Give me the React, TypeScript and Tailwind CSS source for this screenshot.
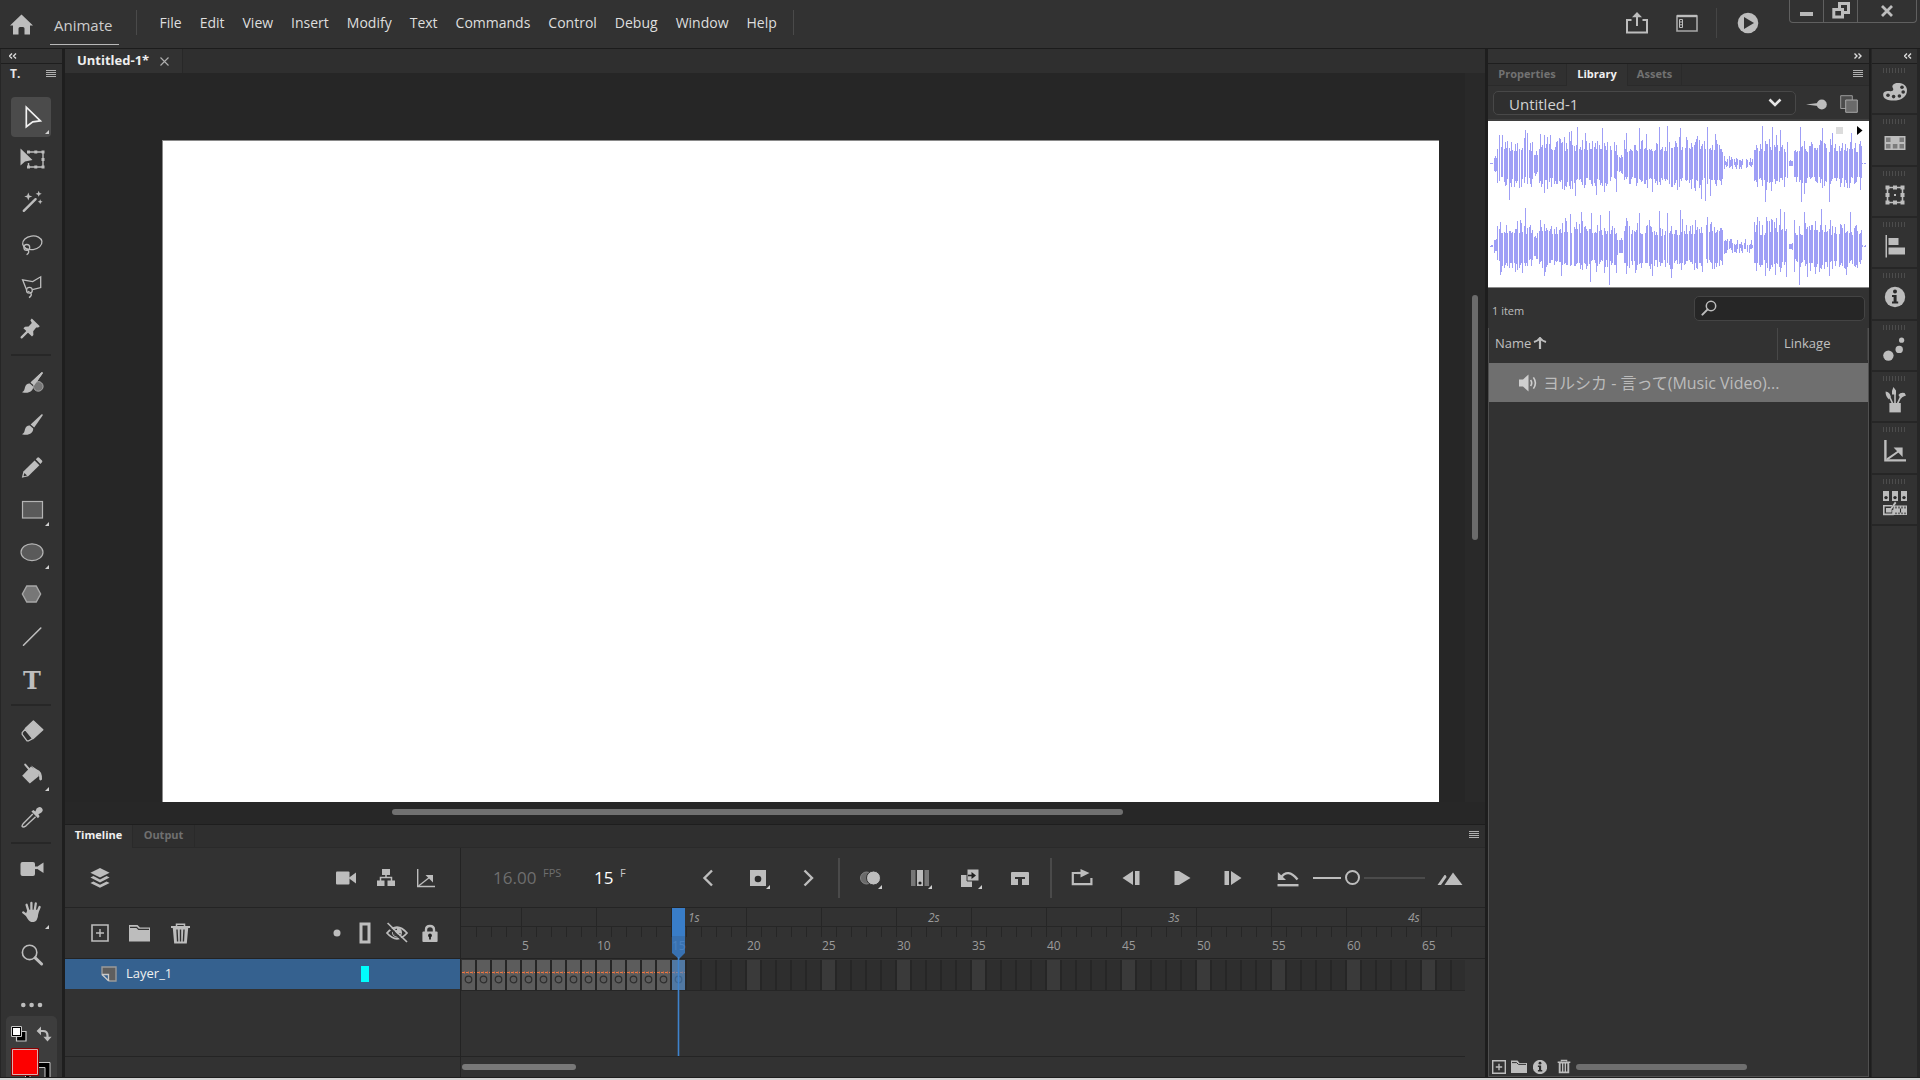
import { useState } from 'react';
import type { ReactNode } from 'react';

const menus = ['File', 'Edit', 'View', 'Insert', 'Modify', 'Text', 'Commands', 'Control', 'Debug', 'Window', 'Help'];

const FRAME_COUNT = 67;
const FPS = 16;
const frames = Array.from({ length: FRAME_COUNT }, (_, i) => i + 1);

type IconProps = { children: ReactNode; size?: number; className?: string };

// icons are drawn on a square grid, one unit to the pixel
const Icon = ({ children, size = 28, className = 'text-[#bdbdbd]' }: IconProps) => (
  <svg width={size} height={size} viewBox={`0 0 ${size} ${size}`} fill="none" className={`shrink-0 ${className}`} aria-hidden="true">
    {children}
  </svg>
);

const Corner = ({ className = 'right-[2px] bottom-[3px]' }: { className?: string }) => (
  <svg width="4" height="4" viewBox="0 0 4 4" className={`absolute ${className}`} aria-hidden="true">
    <path d="M4 0V4H0Z" fill="#d0d0d0" />
  </svg>
);

const Hamburger = () => (
  <svg width="10" height="8" viewBox="0 0 10 8" shapeRendering="crispEdges" aria-hidden="true">
    <path d="M0 .5H10M0 2.5H10M0 4.5H10M0 6.5H10" stroke="#b0b0b0" />
  </svg>
);

const Chevrons = ({ right = false }: { right?: boolean }) => (
  <svg width="8" height="6" viewBox="0 0 8 6" fill="none" aria-hidden="true">
    <path d={right ? 'M.5 .5L3 3L.5 5.5M4.5 .5L7 3L4.5 5.5' : 'M3 .5L.5 3L3 5.5M7 .5L4.5 3L7 5.5'} stroke="#dcdcdc" strokeWidth="1.4" />
  </svg>
);

const BrushShape = () => (
  <g fill="currentColor">
    <path d="M24.6 4.2C25.6 3.9 26 4.6 25.6 5.6L17.2 17.6L13.6 14.4Z" />
    <path d="M12.8 15.4L16.2 18.6C16.6 23.4 11 26.2 5 24.2C7.4 23 7.4 21.6 8 19.2C8.6 16.4 10.4 15.2 12.8 15.4Z" />
  </g>
);

const CameraShape = () => (
  <g fill="currentColor">
    <rect x="3.5" y="7" width="14.5" height="14" rx="2" />
    <path d="M18.5 12.8L26.5 7.6V18Z" />
    <rect x="17" y="11.5" width="3" height="2.6" />
  </g>
);

type Tool = { name: string; icon: ReactNode; more?: boolean };

const toolGroups: { height: string; divider: string; tools: Tool[] }[] = [
  {
    height: 'h-[251px]',
    divider: 'my-[6px]',
    tools: [
      { name: 'Selection', more: true, icon: <path d="M9.3 4.2V23.7L15.8 18.9L23.4 17.9Z" stroke="#f2f2f2" strokeWidth="1.7" strokeLinejoin="miter" /> },
      {
        name: 'Free Transform',
        icon: (
          <>
            <path d="M11.5 7H26V22H11.5V18" stroke="currentColor" strokeWidth="1.4" />
            <path d="M10 5.5h3v3h-3zM17.3 5.5h3v3h-3zM24.5 5.5h3v3h-3zM24.5 13h3v3h-3zM24.5 20.5h3v3h-3zM17.3 20.5h3v3h-3zM10 20.5h3v3h-3z" fill="currentColor" />
            <path d="M3.5 3.5V20.5L8 16.5L15.5 15Z" fill="currentColor" />
          </>
        ),
      },
      {
        name: 'Magic Wand',
        icon: (
          <>
            <path d="M6.8 23.8L18.6 12.2" stroke="currentColor" strokeWidth="2.4" strokeLinecap="round" />
            <path d="M11.3 5.5L12.4 8.4L15.3 9.5L12.4 10.6L11.3 13.5L10.2 10.6L7.3 9.5L10.2 8.4ZM21.7 3.8L22.6 6L24.8 6.8L22.6 7.7L21.7 9.8L20.8 7.7L18.6 6.8L20.8 6ZM23.2 12.3L23.9 14L25.6 14.8L23.9 15.5L23.2 17.2L22.5 15.5L20.8 14.8L22.5 14Z" fill="currentColor" />
          </>
        ),
      },
      {
        name: 'Lasso',
        icon: (
          <g stroke="currentColor" strokeWidth="1.3">
            <ellipse cx="15.3" cy="12.8" rx="9.7" ry="6.8" transform="rotate(-8 15.3 12.8)" />
            <circle cx="9.8" cy="17.4" r="2.9" />
            <path d="M8 18.2C11.5 19.6 13.5 22.1 9.6 24.8" />
          </g>
        ),
      },
      {
        name: 'Polygon Lasso',
        icon: (
          <g stroke="currentColor" strokeWidth="1.3">
            <path d="M9.4 17.6L5.6 7.8L15.7 9.6L23.7 4.8V15.6L15.4 17.6" />
            <circle cx="12.4" cy="18.2" r="2.9" />
            <path d="M10.6 19C14.4 20.4 16 23 12 25.6" />
          </g>
        ),
      },
      {
        name: 'Asset Warp',
        icon: (
          <g fill="currentColor">
            <path d="M14.8 4.6L22.8 12.2L21.2 13.6L19.2 13.4L16.2 17.2L16.4 21L15 22.6L6.4 14.2L8 12.8L11.6 12.6L14.8 9L13.4 6.2Z" />
            <path d="M10.6 17.4L4.6 23.4" stroke="currentColor" strokeWidth="2.2" strokeLinecap="round" />
          </g>
        ),
      },
    ],
  },
  {
    height: 'h-[337px]',
    divider: 'my-[5px]',
    tools: [
      {
        name: 'Fluid Brush',
        icon: (
          <>
            <BrushShape />
            <circle cx="21.3" cy="18.4" r="4.8" fill="#777777" stroke="#a8a8a8" />
            <path d="M24.6 4.2C25.6 3.9 26 4.6 25.6 5.6L17.2 17.6L13.6 14.4Z" fill="currentColor" />
          </>
        ),
      },
      { name: 'Classic Brush', icon: <BrushShape /> },
      {
        name: 'Pencil',
        icon: (
          <>
            <path d="M17.6 7.4L22.4 12.2L11.2 23.2L4.8 24.8L6.4 18.4Z" fill="currentColor" />
            <path d="M18.8 6.2L20.6 4.6Q21.4 4 22.2 4.8L25 7.6Q25.8 8.4 25 9.2L23.4 11Z" fill="currentColor" />
            <path d="M7.4 20L10 22.4L7 23.2L6.6 22.8Z" fill="#323232" />
          </>
        ),
      },
      { name: 'Rectangle', more: true, icon: <rect x="5.5" y="6.5" width="20" height="16.5" fill="#5a5a5a" stroke="#b4b4b4" strokeWidth="1.2" /> },
      { name: 'Oval', more: true, icon: <ellipse cx="15" cy="14.2" rx="11" ry="8.4" fill="#5a5a5a" stroke="#b4b4b4" strokeWidth="1.2" /> },
      { name: 'PolyStar', icon: <path d="M9.8 6H19.2L23.6 14L19.2 22H9.8L5.4 14Z" fill="#777777" stroke="#a8a8a8" strokeWidth="1.4" /> },
      { name: 'Line', icon: <path d="M6.5 22.2L23.8 5" stroke="currentColor" strokeWidth="1.6" strokeLinecap="round" /> },
      { name: 'Text', icon: <text x="15" y="24" textAnchor="middle" fontFamily="DejaVu Serif, serif" fontWeight="bold" fontSize="24" fill="currentColor">T</text> },
    ],
  },
  {
    height: 'h-[126px]',
    divider: 'my-[5px]',
    tools: [
      {
        name: 'Eraser',
        icon: (
          <>
            <path d="M16.4 4L25.8 12.8L16.2 21.4L8.4 11.6Z" fill="currentColor" stroke="currentColor" strokeWidth="1.4" strokeLinejoin="round" />
            <path d="M8 12.4L5.2 15.6V17.4L10 23.8H11.8L15.6 21.6Z" stroke="currentColor" strokeWidth="1.3" strokeLinejoin="round" />
          </>
        ),
      },
      {
        name: 'Paint Bucket',
        more: true,
        icon: (
          <>
            <path d="M8.2 4.6L11.6 8.6L15 13" stroke="currentColor" strokeWidth="2" strokeLinecap="round" />
            <path d="M14 6.6L20.4 12L22 16L12.8 23.4L5.2 15.8Z" fill="currentColor" />
            <path d="M14 5.6L20 9.4Q25.4 11 25 19.6Q23.4 21.4 22.2 19.2Q22.8 14.4 19.6 13.4Z" fill="currentColor" />
          </>
        ),
      },
      {
        name: 'Eyedropper',
        icon: (
          <>
            <path d="M15.8 11L6.4 20.4Q4.4 23 5.4 23.8Q6.4 24.6 9 22.8L18.6 13.8" stroke="currentColor" strokeWidth="1.4" />
            <path d="M14.4 8.4L16.4 7L18.4 8.4L19.6 5.6Q22.4 2.8 24.8 5Q27 7.4 24.2 9.8L21.4 11.2L22.6 13.2L21 15.2Z" fill="currentColor" />
          </>
        ),
      },
    ],
  },
  {
    height: 'h-[126px]',
    divider: '',
    tools: [
      { name: 'Camera', icon: <CameraShape /> },
      {
        name: 'Hand',
        more: true,
        icon: (
          <>
            <path d="M9.6 6.8L11.8 14.2M14.4 5V13.2M18.8 5.4L17.6 13.2M22.6 9L20 15.2M6.2 14.4L11 18.2" stroke="currentColor" strokeWidth="2.3" strokeLinecap="round" />
            <path d="M10.6 11.8H20.8L21.4 15Q20.6 23.8 16.8 24H14.2Q11.4 23.4 8.4 16.8Z" fill="currentColor" />
          </>
        ),
      },
      {
        name: 'Zoom',
        icon: (
          <>
            <circle cx="12.6" cy="11.4" r="7.2" stroke="currentColor" strokeWidth="1.6" />
            <path d="M18.2 16.8L24.6 23" stroke="currentColor" strokeWidth="3" strokeLinecap="round" />
          </>
        ),
      },
    ],
  },
];

const ToolsPanel = () => {
  const [active, setActive] = useState('Selection');

  return (
    <aside className="flex w-[62px] shrink-0 flex-col overflow-hidden border-l border-[#262626] bg-[#323232]">
      <div className="flex h-[15px] shrink-0 items-center border-b border-[#1e1e1e] pl-2">
        <Chevrons />
      </div>
      <div className="flex h-[22px] shrink-0 items-center justify-between pr-[6px] pb-[2px] pl-[9px] text-[12px] font-bold text-[#e6e6e6]">
        <span>T.</span>
        <button aria-label="Tools menu"><Hamburger /></button>
      </div>
      <div className="flex flex-col items-start pt-[11px] pl-[10px]">
        {toolGroups.map((group, i) => (
          <div key={i} className="flex flex-col items-center">
            <div className={`flex flex-col justify-between ${group.height}`}>
              {group.tools.map((tool) => (
                <button
                  key={tool.name}
                  aria-label={tool.name}
                  onClick={() => setActive(tool.name)}
                  className={`relative flex size-10 items-center justify-center rounded-[4px] ${active === tool.name ? 'bg-[#4b4b4b]' : ''}`}
                >
                  <Icon>{tool.icon}</Icon>
                  {tool.more && <Corner />}
                </button>
              ))}
            </div>
            {group.divider && <div className={`h-[2px] w-10 bg-[#272727] ${group.divider}`} />}
          </div>
        ))}
        <button aria-label="Edit toolbar" className="mt-5 flex h-5 w-10 items-center justify-center">
          <Icon>
            <g fill="currentColor">
              <circle cx="6.3" cy="14" r="2.3" />
              <circle cx="14.6" cy="14" r="2.3" />
              <circle cx="23" cy="14" r="2.3" />
            </g>
          </Icon>
        </button>
      </div>
      <div className="mx-[5px] mt-px flex-1 rounded-t-[5px] bg-[#3d3d3d] px-[5px] pt-[10px]">
        <div className="flex justify-between">
          <button aria-label="Default colors">
            <Icon size={16}>
              <path d="M5.5 5.5H15V15H5.5Z" fill="#000" stroke="#c8c8c8" strokeWidth="1.2" />
              <path d="M1 1H10V10H1Z" fill="#fff" stroke="#000" strokeWidth="2" />
              <path d="M.5 .5H10.5V10.5H.5Z" stroke="#c8c8c8" />
            </Icon>
          </button>
          <button aria-label="Swap colors">
            <Icon size={16}>
              <path d="M3.5 5H7Q11.5 5 11.5 9.5V12" stroke="currentColor" strokeWidth="2.2" />
              <path d="M5 .6V9.2L.6 5ZM7.4 10.8H15.6L11.5 15.6Z" fill="currentColor" />
            </Icon>
          </button>
        </div>
        <button aria-label="Fill and stroke color" className="mt-[6px] block">
          <svg width="40" height="30" viewBox="0 0 40 30" fill="none" aria-hidden="true">
            <path d="M14.5 14.5H39V40H14.5Z" fill="#000" stroke="#c8c8c8" />
            <path d="M19 19.5H34V40H19Z" fill="#323232" stroke="#c8c8c8" />
            <path d="M.5 .5H27.5V27.5H.5Z" fill="#fd0000" stroke="#8c0000" />
            <path d="M1.5 1.5H26.5V26.5H1.5Z" stroke="#d9b0b0" />
          </svg>
        </button>
      </div>
    </aside>
  );
};

const Header = () => (
  <header className="flex h-[49px] shrink-0 items-start border-b border-[#1c1c1c] bg-[#323232]">
    <div className="flex h-12 flex-1 items-center">
      <button aria-label="Home" className="ml-[10px]">
        <Icon size={23}>
          <path d="M11.5 1.5L23 12.5H20V21.5H14.5V15.5Q14.5 14 13 14H10Q8.5 14 8.5 15.5V21.5H3V12.5H0Z" fill="currentColor" />
        </Icon>
      </button>
      <a href="#" className="ml-[17px] flex h-[45px] items-center self-start border-b border-[#b8b8b8] pt-[6px] pr-[7px] pl-1 text-[15px] text-[#cdcdcd]">Animate</a>
      <div className="mb-[3px] ml-[17px] h-[25px] w-px bg-[#4a4a4a]" />
      <nav className="ml-[22px] flex gap-[18px] pb-1 text-[14px] text-[#dedede]">
        {menus.map((menu) => (
          <button key={menu}>{menu}</button>
        ))}
      </nav>
      <div className="mb-[3px] ml-4 h-[25px] w-px bg-[#4a4a4a]" />
    </div>
    <div className="mr-[30px] flex h-[46px] items-center">
      <button aria-label="Quick share">
        <Icon size={22}>
          <path d="M5.5 8H1V20.5H21V8H16.5" stroke="currentColor" strokeWidth="2" />
          <path d="M11 3V14" stroke="currentColor" strokeWidth="2" />
          <path d="M11 0L16 5.2H6Z" fill="currentColor" />
        </Icon>
      </button>
      <button aria-label="Workspaces" className="ml-7">
        <Icon size={22}>
          <path d="M1 4H21V19H1Z" stroke="#a8a8a8" strokeWidth="1.6" />
          <path d="M3.5 7.5H6.5V15.5H3.5ZM3.5 10H6.5M3.5 12.8H6.5" stroke="currentColor" />
          <path d="M1 4H21" stroke="currentColor" strokeWidth="2.4" />
        </Icon>
      </button>
      <div className="ml-[18px] h-[30px] w-px bg-[#454545]" />
      <button aria-label="Test movie" className="ml-5">
        <Icon size={22}>
          <circle cx="11" cy="11" r="10.3" fill="currentColor" />
          <path d="M7 5V17L17 11Z" fill="#323232" />
        </Icon>
      </button>
    </div>
    <div className="mr-[3px] flex h-[23px] rounded-b-[4px] border border-t-0 border-[#606060]">
      <button aria-label="Minimize" className="flex w-[34px] items-center justify-center border-r border-[#606060]">
        <span className="mt-[6px] h-1 w-[13px] bg-[#b8b8b8]" />
      </button>
      <button aria-label="Restore" className="flex w-[34px] items-center justify-center border-r border-[#606060]">
        <Icon size={18}>
          <path d="M7.5 6V1.5H16.5V10.5H12" stroke="currentColor" strokeWidth="3" />
          <path d="M1.8 7.5H10.5V15H1.8Z" stroke="currentColor" strokeWidth="3" />
        </Icon>
      </button>
      <button aria-label="Close" className="flex w-[58px] items-center justify-center">
        <Icon size={14}>
          <path d="M2 2L12 12M12 2L2 12" stroke="currentColor" strokeWidth="2.8" />
        </Icon>
      </button>
    </div>
  </header>
);

const Stage = () => (
  <section className="flex min-h-0 flex-1 flex-col">
    <div className="flex h-6 shrink-0 bg-[#2f2f2f]">
      <div className="flex w-[118px] items-center justify-between border-r border-[#282828] bg-[#323232] pr-[13px] pl-3 text-[13px] font-bold text-[#eeeeee]">
        <span>Untitled-1*</span>
        <button aria-label="Close document">
          <Icon size={9}><path d="M.5 .5L8.5 8.5M8.5 .5L.5 8.5" stroke="#b0b0b0" strokeWidth="1.1" /></Icon>
        </button>
      </div>
    </div>
    <div className="flex min-h-0 flex-1">
      <div className="flex min-w-0 flex-1 bg-[#262626] pt-[67px] pr-[26px] pl-[97px]">
        <div className="flex-1 border-t border-l border-[#8a8a8a] bg-white" />
      </div>
      <div className="flex w-5 justify-center bg-[#292929] pt-[222px]">
        <div className="h-[245px] w-[6px] rounded-full bg-[#6b6b6b]" />
      </div>
    </div>
    <div className="flex h-[22px] shrink-0 items-center bg-[#272727] pb-[2px]">
      <div className="ml-[23%] h-[6px] w-[51.5%] rounded-full bg-[#707070]" />
    </div>
  </section>
);

const PlusBox = () => (
  <Icon size={18}>
    <path d="M1 1H17V17H1Z" stroke="currentColor" strokeWidth="1.6" />
    <path d="M9 5V13M5 9H13" stroke="currentColor" strokeWidth="1.4" />
  </Icon>
);

const Folder = () => (
  <Icon size={21}>
    <path d="M0 2H8.5L11 4.5H21V18.5H0Z" fill="currentColor" />
    <path d="M1 4.4H7.6L9.6 6.4H20" stroke="#323232" strokeWidth="1.2" />
  </Icon>
);

const Trash = () => (
  <Icon size={21}>
    <path d="M6.5 3V1.2H14.5V3" stroke="currentColor" strokeWidth="1.5" />
    <path d="M1 3H20V5H18.2L16.8 20.5H4.2L2.8 5H1Z" fill="currentColor" />
    <path d="M7 6.5L7.6 18.5M10.5 6.5V18.5M14 6.5L13.4 18.5" stroke="#323232" strokeWidth="1.4" />
  </Icon>
);

const LayerPane = () => (
  <div className="flex w-[396px] shrink-0 flex-col border-r border-[#232323]">
    <div className="flex h-[60px] items-center border-b border-[#242424] pl-[25px]">
      <button aria-label="Layers view">
        <Icon size={20}>
          <path d="M10 0L19.6 4.8L10 9.6L.4 4.8Z" fill="currentColor" />
          <path d="M.4 9.6L3.4 8.1L10 11.4L16.6 8.1L19.6 9.6L10 14.4ZM.4 15L3.4 13.5L10 16.8L16.6 13.5L19.6 15L10 19.8Z" fill="currentColor" />
        </Icon>
      </button>
      <div className="mr-[14px] ml-auto flex">
        <button aria-label="Add camera" className="flex w-10 justify-center">
          <Icon size={20}>
            <rect x="0" y="3.5" width="13.5" height="13" rx="1" fill="currentColor" />
            <path d="M12.5 10L20 4.6V15.4Z" fill="currentColor" />
          </Icon>
        </button>
        <button aria-label="Layer parenting" className="flex w-10 justify-center">
          <Icon size={20}>
            <path d="M6 1H14V7H6ZM1 12.5H8.5V18H1ZM11.5 12.5H19V18H11.5Z" fill="currentColor" />
            <path d="M10 6V10M4.5 13V9.5H15.5V13" stroke="currentColor" strokeWidth="1.5" />
          </Icon>
        </button>
        <button aria-label="Layer depth" className="flex w-10 justify-center">
          <Icon size={20}>
            <path d="M1.7 1V18.5H19" stroke="currentColor" strokeWidth="1.4" />
            <path d="M2.5 18L14 9" stroke="currentColor" strokeWidth="1.3" />
            <path d="M9.5 7H17V14.5Z" fill="currentColor" />
          </Icon>
        </button>
      </div>
    </div>
    <div className="flex h-[51px] items-center border-b border-[#232323] pl-[26px]">
      <div className="flex items-center gap-5">
        <button aria-label="New layer"><PlusBox /></button>
        <button aria-label="New folder"><Folder /></button>
        <button aria-label="Delete layer"><Trash /></button>
      </div>
      <div className="mr-[21px] ml-auto flex items-center">
        <button aria-label="Highlight layers"><Icon size={8}><circle cx="4" cy="4" r="3.5" fill="currentColor" /></Icon></button>
        <button aria-label="Outline layers" className="ml-[13px]"><Icon size={22}><path d="M7 2H15V20H7Z" stroke="currentColor" strokeWidth="3" /></Icon></button>
        <button aria-label="Hide layers" className="ml-[10px]">
          <Icon size={22}>
            <path d="M1 11Q11 -.5 21 11Q11 22.5 1 11Z" stroke="currentColor" strokeWidth="1.8" />
            <circle cx="11" cy="10.5" r="5" fill="currentColor" />
            <path d="M11 7.4A3.2 3.2 0 1 0 14 11" stroke="#323232" strokeWidth="1.2" />
            <path d="M.5 2.8L19.5 21.4" stroke="#323232" strokeWidth="2" />
            <path d="M1.6 1L21 20" stroke="currentColor" strokeWidth="1.7" />
          </Icon>
        </button>
        <button aria-label="Lock layers" className="ml-[13px]">
          <Icon size={18}>
            <path d="M5 10V5.8Q5 2 9 2Q13 2 13 5.8V10" stroke="currentColor" strokeWidth="2.4" />
            <rect x="1.4" y="7.6" width="15.2" height="10.4" rx="1" fill="currentColor" />
            <circle cx="9" cy="11.4" r="1.9" fill="#222222" />
            <path d="M8.1 12H9.9V15.6H8.1Z" fill="#222222" />
          </Icon>
        </button>
      </div>
    </div>
    <button className="flex h-[30px] items-center bg-[#35618f] pl-9 text-[13px] text-[#f0f0f0]">
      <Icon size={16}>
        <path d="M1 1H15V15H8.5L1 8.5Z" fill="#5e5e5e" stroke="#9a9a9a" strokeWidth="1.4" />
        <path d="M1 8.5H7.5V15" fill="#35618f" stroke="#c8c8c8" strokeWidth="1.3" />
        <path d="M1 8.5L7.8 15" stroke="#c8c8c8" strokeWidth="1.3" />
      </Icon>
      <span className="ml-[9px]">Layer_1</span>
      <span className="mr-[91px] ml-auto h-4 w-2 bg-[#00fdfd]" />
    </button>
    <div className="flex-1" />
    <div className="h-[21px] border-t border-[#242424]" />
  </div>
);

const ControlButton = ({ label, more, children }: { label: string; more?: boolean; children: ReactNode }) => (
  <button aria-label={label} className="flex w-[50px] shrink-0 justify-center">
    <span className="relative">
      <Icon size={22}>{children}</Icon>
      {more && <Corner className="-right-[1px] bottom-0" />}
    </span>
  </button>
);

const Separator = () => <div className="mx-[5px] h-10 w-[2px] shrink-0 bg-[#4a4a4a]" />;

const Controls = () => {
  const [zoom, setZoom] = useState(33);

  return (
    <div className="flex h-[60px] shrink-0 items-center overflow-hidden border-b border-[#242424] pl-8">
      <label className="flex w-[101px] shrink-0 items-start text-[11px] text-[#6e6e6e]">
        <input defaultValue="16.00" className="w-[50px] bg-transparent text-[17px]" />
        <span>FPS</span>
      </label>
      <label className="flex w-[89px] shrink-0 items-start text-[11px] text-[#c8c8c8]">
        <input defaultValue="15" className="w-[26px] bg-transparent text-[17px] text-white" />
        <span>F</span>
      </label>
      <ControlButton label="Previous keyframe"><path d="M15 3.5L7.5 11L15 18.5" stroke="currentColor" strokeWidth="2.4" /></ControlButton>
      <ControlButton label="Insert keyframe" more>
        <rect x="3" y="3" width="16" height="16" fill="currentColor" />
        <circle cx="11" cy="12" r="3.3" fill="#2a2a2a" />
      </ControlButton>
      <ControlButton label="Next keyframe"><path d="M7.5 3.5L15 11L7.5 18.5" stroke="currentColor" strokeWidth="2.4" /></ControlButton>
      <Separator />
      <ControlButton label="Onion skin" more>
        <circle cx="7.5" cy="11" r="6" fill="#6a6a6a" stroke="#858585" />
        <circle cx="14.5" cy="11" r="7" fill="currentColor" stroke="#323232" />
      </ControlButton>
      <ControlButton label="Edit multiple frames" more>
        <path d="M2 3H6.5V19H2ZM15.5 3H20V19H15.5Z" fill="#777777" />
        <path d="M8 3H14V19H8Z" fill="currentColor" />
        <circle cx="11" cy="16" r="1.6" fill="#1e1e1e" />
      </ControlButton>
      <ControlButton label="Create tween" more>
        <path d="M2 8H13V20H2Z" fill="currentColor" />
        <path d="M8 2H20V14H8Z" fill="currentColor" stroke="#323232" />
        <path d="M9 8.5H14" stroke="#222222" strokeWidth="1.6" />
        <path d="M12.5 5L17 8.5L12.5 12Z" fill="#222222" />
      </ControlButton>
      <ControlButton label="Insert frame">
        <path d="M2 6Q2 5 3 5H19Q20 5 20 6V18H13V12H16V10H6V12H9V18H2Z" fill="currentColor" />
      </ControlButton>
      <Separator />
      <ControlButton label="Loop">
        <path d="M6 6H1.8V17.2H20.4V11" stroke="currentColor" strokeWidth="2.2" />
        <path d="M6 6H10" stroke="currentColor" strokeWidth="2.2" />
        <path d="M9.5 2L18.5 6L9.5 10.5Z" fill="currentColor" />
      </ControlButton>
      <ControlButton label="Step back"><path d="M12 4V18L1.5 11ZM14 4H18.5V18H14Z" fill="currentColor" /></ControlButton>
      <ControlButton label="Play"><path d="M3.5 4L8 4L19.5 11L8 18H3.5Z" fill="currentColor" /></ControlButton>
      <ControlButton label="Step forward"><path d="M10 4V18L20.5 11ZM3.5 4H8V18H3.5Z" fill="currentColor" /></ControlButton>
      <div className="w-[6px]" />
      <ControlButton label="Reset timeline zoom">
        <path d="M3.5 11Q11 .5 20.5 12.5" stroke="currentColor" strokeWidth="2.4" />
        <path d="M.8 5V13H9Z" fill="currentColor" />
        <path d="M.5 18.2H21.5" stroke="currentColor" strokeWidth="2.4" />
      </ControlButton>
      <input
        type="range"
        aria-label="Timeline zoom"
        value={zoom}
        onChange={(e) => setZoom(Number(e.target.value))}
        className="h-[2px] w-[112px] shrink-0 appearance-none bg-[linear-gradient(90deg,#bdbdbd_28px,transparent_28px,transparent_51px,#4b4b4b_51px)] [&::-webkit-slider-thumb]:size-[15px] [&::-webkit-slider-thumb]:appearance-none [&::-webkit-slider-thumb]:rounded-full [&::-webkit-slider-thumb]:border-2 [&::-webkit-slider-thumb]:border-[#bdbdbd] [&::-webkit-slider-thumb]:bg-transparent"
      />
      <button aria-label="Zoom in timeline" className="flex w-[50px] shrink-0 justify-center">
        <Icon size={26}>
          <path d="M16 7.5L25.5 20H7.5ZM8.5 10L9.6 12L4 20H.5L7.5 10Z" fill="currentColor" />
        </Icon>
      </button>
    </div>
  );
};

const Ruler = () => (
  <div className="flex h-[51px] shrink-0 overflow-hidden border-b border-[#232323] text-[12px] text-[#9b9b9b]">
    {frames.map((n) => (
      <div key={n} className="flex w-[15px] shrink-0 flex-col">
        <div className={`h-[19px] border-b border-b-[#262626] ${n % 5 === 0 ? 'border-l border-l-[#262626]' : ''}`}>
          {n % FPS === 0 && <span className="block pl-[2px] leading-5 italic">{n / FPS}s</span>}
        </div>
        <div className={`h-[10px] ${n > 1 ? 'border-l border-l-[#262626]' : ''}`} />
        {n % 5 === 0 && <span className="pl-px leading-[18px]">{n}</span>}
      </div>
    ))}
    <div className="h-[19px] flex-1 border-b border-[#262626]" />
  </div>
);

const FrameRow = () => (
  <div className="mr-5 flex h-8 shrink-0 overflow-hidden border-b border-[#262626] pt-px pl-px">
    {frames.map((n) => {
      if (n <= 15) {
        return (
          <div key={n} className="w-[15px] shrink-0 border-r-2 border-[#262626] bg-[#5c5c5c]">
            <svg width="13" height="30" viewBox="0 0 13 30" fill="none" aria-hidden="true">
              <path d="M0 12.5H13" stroke="#f07a45" strokeDasharray="3 1" />
              <path d="M2.5 11V14M6.5 11V14M10.5 11V14" stroke="#c4623c" strokeOpacity=".7" />
              <circle cx="6.5" cy="19.5" r="3.3" stroke="#2e2e2e" strokeWidth="1.2" />
            </svg>
          </div>
        );
      }
      return <div key={n} className={`w-[15px] shrink-0 border-r-2 border-[#262626] ${n % 5 === 0 ? 'bg-[#3a3a3a]' : 'bg-[#2e2e2e]'}`} />;
    })}
  </div>
);

const Playhead = () => (
  <svg width="15" height="148" viewBox="0 0 15 148" className="absolute top-0 left-[211px]" aria-hidden="true">
    <path d="M0 0H13V45L7 51L0 45Z" fill="#397dc8" fillOpacity=".85" />
    <path d="M0 0H13V28H0Z" fill="#397dc8" />
    <path d="M0 52H13V82H0Z" fill="#4a8bd0" fillOpacity=".6" />
    <path d="M6.5 49V148" stroke="#3f83cd" strokeWidth="1.6" />
  </svg>
);

const Timeline = () => (
  <section className="flex h-[253px] shrink-0 flex-col border-t border-[#1e1e1e] bg-[#323232]">
    <div className="flex h-[23px] shrink-0 items-stretch bg-[#2f2f2f] text-[11px] font-bold" role="tablist">
      <button role="tab" className="w-[67px] bg-[#323232] pb-[3px] text-[#f0f0f0]">Timeline</button>
      <button role="tab" className="w-[63px] border-r border-b border-l border-[#2a2a2a] pb-[2px] text-[#707070]">Output</button>
      <div className="flex flex-1 items-center justify-end border-b border-[#2a2a2a] pr-[6px] pb-[3px]">
        <button aria-label="Timeline menu"><Hamburger /></button>
      </div>
    </div>
    <div className="flex min-h-0 flex-1">
      <LayerPane />
      <div className="flex min-w-0 flex-1 flex-col">
        <Controls />
        <div className="relative flex min-h-0 flex-1 flex-col">
          <Ruler />
          <FrameRow />
          <Playhead />
          <div className="mr-5 flex-1 border-b border-[#242424]" />
        </div>
        <div className="flex h-5 items-center pl-px">
          <div className="h-[6px] w-[114px] rounded-full bg-[#787878]" />
        </div>
      </div>
    </div>
  </section>
);

// [x, height] of the tallest strokes above and below each channel's axis
const channels = [
  {
    axis: 490,
    up: [[122, 85], [128, 85], [195, 100], [202, 90], [240, 88], [270, 85], [312, 78], [328, 95], [333, 97], [352, 109], [375, 90], [427, 105], [457, 85], [500, 90], [538, 105], [560, 88], [598, 110], [622, 112], [660, 107], [674, 112], [742, 108], [766, 88], [907, 112], [937, 110], [950, 86], [961, 100], [978, 88], [1021, 110], [1060, 92], [1088, 105], [1118, 90], [1175, 90]],
    down: [[122, 73], [148, 110], [164, 70], [253, 90], [275, 70], [346, 97], [408, 95], [432, 85], [470, 85], [577, 85], [725, 108], [736, 113], [750, 98], [784, 65], [916, 115], [935, 83], [980, 85], [1025, 115], [1033, 92], [1060, 80], [1108, 115], [1150, 80], [1200, 80]],
  },
  {
    axis: 739,
    up: [[120, 74], [195, 114], [203, 54], [240, 79], [315, 84], [330, 96], [363, 104], [395, 99], [422, 94], [447, 107], [500, 84], [538, 99], [598, 107], [622, 99], [660, 109], [715, 84], [742, 87], [858, 36], [893, 89], [920, 87], [961, 112], [973, 104], [1033, 104], [1085, 112], [1110, 79], [1172, 104]],
    down: [[122, 86], [148, 66], [253, 89], [305, 89], [391, 106], [447, 116], [432, 81], [470, 81], [577, 89], [634, 96], [736, 96], [916, 89], [946, 86], [980, 91], [1017, 116], [1041, 91], [1108, 89], [1160, 86]],
  },
];

const noise = (n: number) => {
  const s = Math.sin(n * 12.9898) * 43758.5453;
  return s - Math.floor(s);
};

const loudness = (x: number) => {
  if (x < 102 || x > 1204) return 4;
  if (x < 110) return 32;
  if (x > 790 && x < 882) return 20;
  if (x > 986 && x < 1002) return 14;
  if (x > 470 && x < 490) return 38;
  if (x > 220 && x < 235) return 48;
  return 86;
};

const wavePath = () => {
  let d = '';
  channels.forEach(({ axis, up, down }, c) => {
    for (let i = 0; i < 376; i++) {
      const x = 91 + i * 3;
      // a thin break sits between clusters of strokes
      if (i % 5 === 3 || noise(i + c * 40) > 0.96) continue;
      const level = loudness(x);
      const cluster = 0.75 + 0.25 * noise(Math.floor(i / 5) + c * 90);
      const seed = x + c * 2000;
      let top = level * cluster * (0.5 + 0.5 * noise(seed + 1) ** 2);
      let bottom = level * cluster * (0.6 + 0.4 * noise(seed + 2) ** 2);
      if (level === 20) {
        top = level * noise(seed + 1) + 3;
        bottom = level * noise(seed + 2) + 3;
      }
      up.forEach(([px, h]) => { if (Math.abs(px - x) < 2) top = h; });
      down.forEach(([px, h]) => { if (Math.abs(px - x) < 2) bottom = h; });
      d += `M${x + 0.5} ${Math.round(axis - top)}V${Math.round(axis + bottom)}`;
    }
  });
  return d;
};

const Waveform = () => (
  <div className="relative h-[167px] shrink-0 border-b border-[#8a8a8a] bg-white">
    <svg viewBox="84 363 1143 498" preserveAspectRatio="none" className="block size-full" aria-hidden="true">
      <path d={wavePath()} stroke="#9f9ff6" strokeWidth="3" shapeRendering="crispEdges" />
    </svg>
    <button aria-label="Stop preview" className="absolute top-[6px] right-[26px] size-[7px] bg-[#dcdcdc]" />
    <button aria-label="Play preview" className="absolute top-[5px] right-[6px]">
      <Icon size={9} className="text-black"><path d="M3 0L8.5 4.5L3 9Z" fill="currentColor" /></Icon>
    </button>
  </div>
);

const InfoShape = () => (
  <>
    <circle cx="14" cy="14" r="10.2" fill="currentColor" />
    <circle cx="14" cy="8.6" r="2" fill="#2a2a2a" />
    <path d="M11 12H15.6V18.4H17.2V20.4H11V18.4H12.6V14H11Z" fill="#2a2a2a" />
  </>
);

const Library = () => {
  const [search, setSearch] = useState('');

  return (
    <aside className="flex w-[381px] shrink-0 flex-col bg-[#323232]">
      <div className="flex h-[15px] shrink-0 items-center justify-end border-b border-[#1e1e1e] pr-[7px]">
        <Chevrons right />
      </div>
      <div className="flex h-[22px] shrink-0 bg-[#2f2f2f] text-[11px] font-bold text-[#727272]" role="tablist">
        <button role="tab" className="w-[79px] border-r border-b border-[#2a2a2a] bg-[#303030]">Properties</button>
        <button role="tab" className="w-[60px] bg-[#323232] pb-px text-[#f0f0f0]">Library</button>
        <button role="tab" className="w-[55px] border-r border-b border-l border-[#2a2a2a]">Assets</button>
        <div className="flex flex-1 items-center justify-end border-b border-[#2a2a2a] pr-[6px] pb-[2px]">
          <button aria-label="Library menu"><Hamburger /></button>
        </div>
      </div>
      <div className="flex h-[35px] shrink-0 items-center border-b-2 border-[#3f3f3f] pl-[5px]">
        <div className="relative">
          <select aria-label="Document" className="block h-6 w-[303px] appearance-none rounded-[5px] border border-[#484848] bg-[#2f2f2f] pt-[2px] pl-[15px] text-[15px] leading-5 text-[#d2d2d2]">
            <option>Untitled-1</option>
          </select>
          <svg width="14" height="10" viewBox="0 0 14 10" fill="none" className="pointer-events-none absolute top-[7px] right-[14px]" aria-hidden="true">
            <path d="M1.5 1.5L7 7L12.5 1.5" stroke="#e6e6e6" strokeWidth="2.6" />
          </svg>
        </div>
        <button aria-label="Pin library" className="ml-[10px]">
          <Icon size={22}>
            <path d="M0 12.5L12 11.1V13.9Z" fill="currentColor" />
            <circle cx="15.8" cy="12.5" r="5" fill="currentColor" />
          </Icon>
        </button>
        <button aria-label="New library panel" className="ml-3 pt-[3px]">
          <Icon size={18}>
            <path d="M.7 .7H12.3V13.5H.7Z" fill="#4c4c4c" stroke="#9a9a9a" />
            <path d="M5.7 5H17.3V17.3H5.7Z" fill="#6a6a6a" stroke="#a6a6a6" />
          </Icon>
        </button>
      </div>
      <Waveform />
      <div className="flex h-10 shrink-0 items-center justify-between pr-1 pl-1 text-[#bebebe]">
        <span className="pt-[6px] text-[11px]">1 item</span>
        <label className="flex h-[25px] w-[171px] items-center rounded-[5px] border border-[#444444] bg-[#262626] px-[6px]">
          <Icon size={16}>
            <circle cx="10" cy="6" r="4.7" stroke="currentColor" strokeWidth="1.5" />
            <path d="M6.6 9.4L1.4 14.6" stroke="currentColor" strokeWidth="2" strokeLinecap="round" />
          </Icon>
          <input aria-label="Search library" value={search} onChange={(e) => setSearch(e.target.value)} className="ml-1 min-w-0 flex-1 bg-transparent text-[12px] outline-none" />
        </label>
      </div>
      <div className="flex min-h-0 flex-1 flex-col border-r border-b border-l border-[#505050]">
        <table className="w-full table-fixed text-left">
          <thead>
            <tr className="h-8 text-[13px] text-[#c0c0c0]">
              <th className="border-r border-[#484848] pl-[6px] font-normal">
                <span className="flex items-center gap-[2px]">
                  Name
                  <Icon size={14}><path d="M7 12V1.5M1 5Q5 4 7 1Q9 4 13 5" stroke="currentColor" strokeWidth="2.2" /></Icon>
                </span>
              </th>
              <th className="w-[90px] border-r border-[#404040] pl-[6px] font-normal">Linkage</th>
            </tr>
            <tr className="h-[3px]" />
          </thead>
          <tbody>
            <tr className="h-[39px] bg-[#6f6f6f]">
              <td colSpan={2} className="pl-[29px]">
                <span className="flex items-center gap-[5px] text-[16px] text-[#bcbcbc]">
                  <Icon size={20} className="text-[#cfcfcf]">
                    <path d="M1 6.5H5L10.5 1.5V18.5L5 13.5H1Z" fill="currentColor" />
                    <path d="M12.6 7Q14.8 10 12.6 13M15.4 4.4Q19.4 10 15.4 15.6" stroke="currentColor" strokeWidth="1.6" />
                  </Icon>
                  ヨルシカ - 言って(Music Video)...
                </span>
              </td>
            </tr>
          </tbody>
        </table>
        <div className="mt-auto flex h-[19px] items-center pl-[3px]">
          <button aria-label="New symbol">
            <Icon size={14}>
              <path d="M.7 .7H13.3V13.3H.7Z" stroke="currentColor" strokeWidth="1.4" />
              <path d="M7 3.8V10.2M3.8 7H10.2" stroke="currentColor" strokeWidth="1.4" />
            </Icon>
          </button>
          <button aria-label="New library folder" className="ml-[5px]">
            <Icon size={16}>
              <path d="M0 1.5H6.5L8.5 4H16V14H0Z" fill="currentColor" />
              <path d="M1 3.6H5.6L7.4 5.4H15" stroke="#323232" />
            </Icon>
          </button>
          <button aria-label="Item properties" className="ml-[6px]">
            <svg width="14" height="14" viewBox="4 4 20 20" className="text-[#bdbdbd]" aria-hidden="true"><InfoShape /></svg>
          </button>
          <button aria-label="Delete item" className="ml-[10px]">
            <svg width="14" height="15" viewBox="0 0 21 21" fill="none" className="text-[#bdbdbd]" aria-hidden="true">
              <path d="M6.5 3V1.2H14.5V3" stroke="currentColor" strokeWidth="1.8" />
              <path d="M1 3H20V5.4H18.4V20.5H2.6V5.4H1Z" fill="currentColor" />
              <path d="M6.5 6V18M10.5 6V18M14.5 6V18" stroke="#323232" strokeWidth="2" />
            </svg>
          </button>
          <div className="ml-[5px] h-[6px] w-[171px] rounded-full bg-[#6e6e6e]" />
        </div>
      </div>
    </aside>
  );
};

const dockItems: { name: string; icon: ReactNode }[] = [
  {
    name: 'Color',
    icon: (
      <>
        <path d="M14 5.4C17 4.2 25.8 5 26 12C26.2 19.4 19.4 22.6 12.6 22.6C6 22.6 2 20.6 2.2 16.6C2.4 13 6 12.8 9.4 13.2C12.6 13.4 12.8 11.6 11.6 9.6C10.8 7.8 11.8 6.2 14 5.4Z" fill="currentColor" />
        <g fill="#323232">
          <circle cx="7" cy="17.2" r="1.8" />
          <circle cx="12.6" cy="18.6" r="1.8" />
          <circle cx="18.4" cy="18" r="1.8" />
          <circle cx="22.2" cy="14" r="1.8" />
          <circle cx="21" cy="9.2" r="1.8" />
        </g>
      </>
    ),
  },
  {
    name: 'Swatches',
    icon: (
      <>
        <path d="M3.5 7H24.5V21H3.5Z" fill="currentColor" />
        <path d="M5 8.5H9.5V13H5ZM18.5 8.5H23V13H18.5ZM5 15H9.5V19.5H5ZM11.8 15H16.4V19.5H11.8ZM18.5 15H23V19.5H18.5Z" fill="#7c7c7c" />
      </>
    ),
  },
  {
    name: 'Transform',
    icon: (
      <>
        <path d="M6.5 6.5H21.5V21.5H6.5Z" stroke="currentColor" strokeWidth="1.6" />
        <path d="M4.5 4.5h4v4h-4zM12 4.5h4v4h-4zM19.5 4.5h4v4h-4zM4.5 12h4v4h-4zM19.5 12h4v4h-4zM4.5 19.5h4v4h-4zM12 19.5h4v4h-4zM19.5 19.5h4v4h-4zM13 13h2v2h-2z" fill="currentColor" />
      </>
    ),
  },
  { name: 'Align', icon: <path d="M4.5 3H6V25.5H4.5ZM7.5 6H17.5V13H7.5ZM7.5 15.5H24V22.5H7.5Z" fill="currentColor" /> },
  { name: 'Info', icon: <InfoShape /> },
  {
    name: 'Motion Presets',
    icon: (
      <g fill="currentColor">
        <circle cx="7.4" cy="20.6" r="5.2" />
        <circle cx="18.2" cy="14.4" r="3.7" />
        <circle cx="20.6" cy="5.2" r="2.6" />
      </g>
    ),
  },
  {
    name: 'Brush Library',
    icon: (
      <g fill="currentColor">
        <path d="M8.4 17H19.8V26.4H8.4Z" />
        <path d="M11.6 17.4L8 9.6M14 17V8M16.6 17.4L20.4 9.4" stroke="currentColor" strokeWidth="1.6" />
        <path d="M4.6 5.6Q8.8 6.4 9.8 10.4L8 13.4Q4.4 10.6 4.6 5.6ZM12.4 1L15 4.4V8.6H11V5ZM17.4 9Q19.4 6 23.6 7L25 9.4Q20.8 10.6 20 12.8Z" />
      </g>
    ),
  },
  {
    name: 'Motion Editor',
    icon: (
      <>
        <path d="M4.4 3V23.4H25" stroke="currentColor" strokeWidth="2.4" />
        <path d="M6 22.4L18 14" stroke="currentColor" strokeWidth="2" />
        <path d="M12.6 10.6H21.6V20Z" fill="currentColor" />
      </>
    ),
  },
  {
    name: 'Frame Picker',
    icon: (
      <>
        <path d="M2 2H8V12H2ZM11 2H17V12H11ZM20 2H26V12H20Z" fill="currentColor" />
        <g fill="#2c2c2c"><circle cx="5" cy="8.6" r="1.7" /><circle cx="14" cy="8.6" r="1.7" /><circle cx="23" cy="8.6" r="1.7" /></g>
        <path d="M2.8 16.8H11M2.8 16V25.4H12V21" stroke="currentColor" strokeWidth="1.6" />
        <path d="M5 19H9.6L14 12.6L15.4 14L10.6 20.6V23.4H5Z" fill="currentColor" />
        <path d="M13 16.4H26V26H12V22Z" fill="currentColor" />
        <path d="M15 17.4V19.6M18 17.4V19.6M21 17.4V19.6M24 17.4V19.6M15 23.4V25.2M18 23.4V25.2M21 23.4V25.2M24 23.4V25.2M19.5 19.6V23.4" stroke="#2c2c2c" strokeWidth="1.1" />
      </>
    ),
  },
];

const Dock = () => (
  <aside className="flex w-[49px] shrink-0 flex-col border-r-3 border-l border-[#262626] bg-[#323232]">
    <div className="flex h-[15px] shrink-0 items-center justify-end border-b border-[#1e1e1e] pr-[5px]">
      <Chevrons />
    </div>
    <div className="flex h-[462px] flex-col">
      {dockItems.map((item) => (
        <button key={item.name} aria-label={item.name} className="flex flex-1 flex-col items-center border-b-2 border-[#262626] pt-1">
          <svg width="23" height="5" viewBox="0 0 23 5" shapeRendering="crispEdges" aria-hidden="true">
            <path d="M.5 0V5M3.5 0V5M6.5 0V5M9.5 0V5M12.5 0V5M15.5 0V5M18.5 0V5M21.5 0V5" stroke="#4c4c4c" />
          </svg>
          <span className="mt-[5px]"><Icon>{item.icon}</Icon></span>
        </button>
      ))}
    </div>
  </aside>
);

export default function App() {
  return (
    <div className="flex h-screen flex-col overflow-hidden border-b-2 border-[#d6d6d6] bg-[#1e1e1e] font-['Open_Sans','Noto_Sans_CJK_JP',sans-serif] leading-normal">
      <Header />
      <div className="flex min-h-0 flex-1 border-b border-[#1e1e1e]">
        <ToolsPanel />
        <main className="mr-[3px] ml-[3px] flex min-w-0 flex-1 flex-col">
          <Stage />
          <Timeline />
        </main>
        <Library />
        <div className="w-[2px] shrink-0" />
        <Dock />
      </div>
    </div>
  );
}
